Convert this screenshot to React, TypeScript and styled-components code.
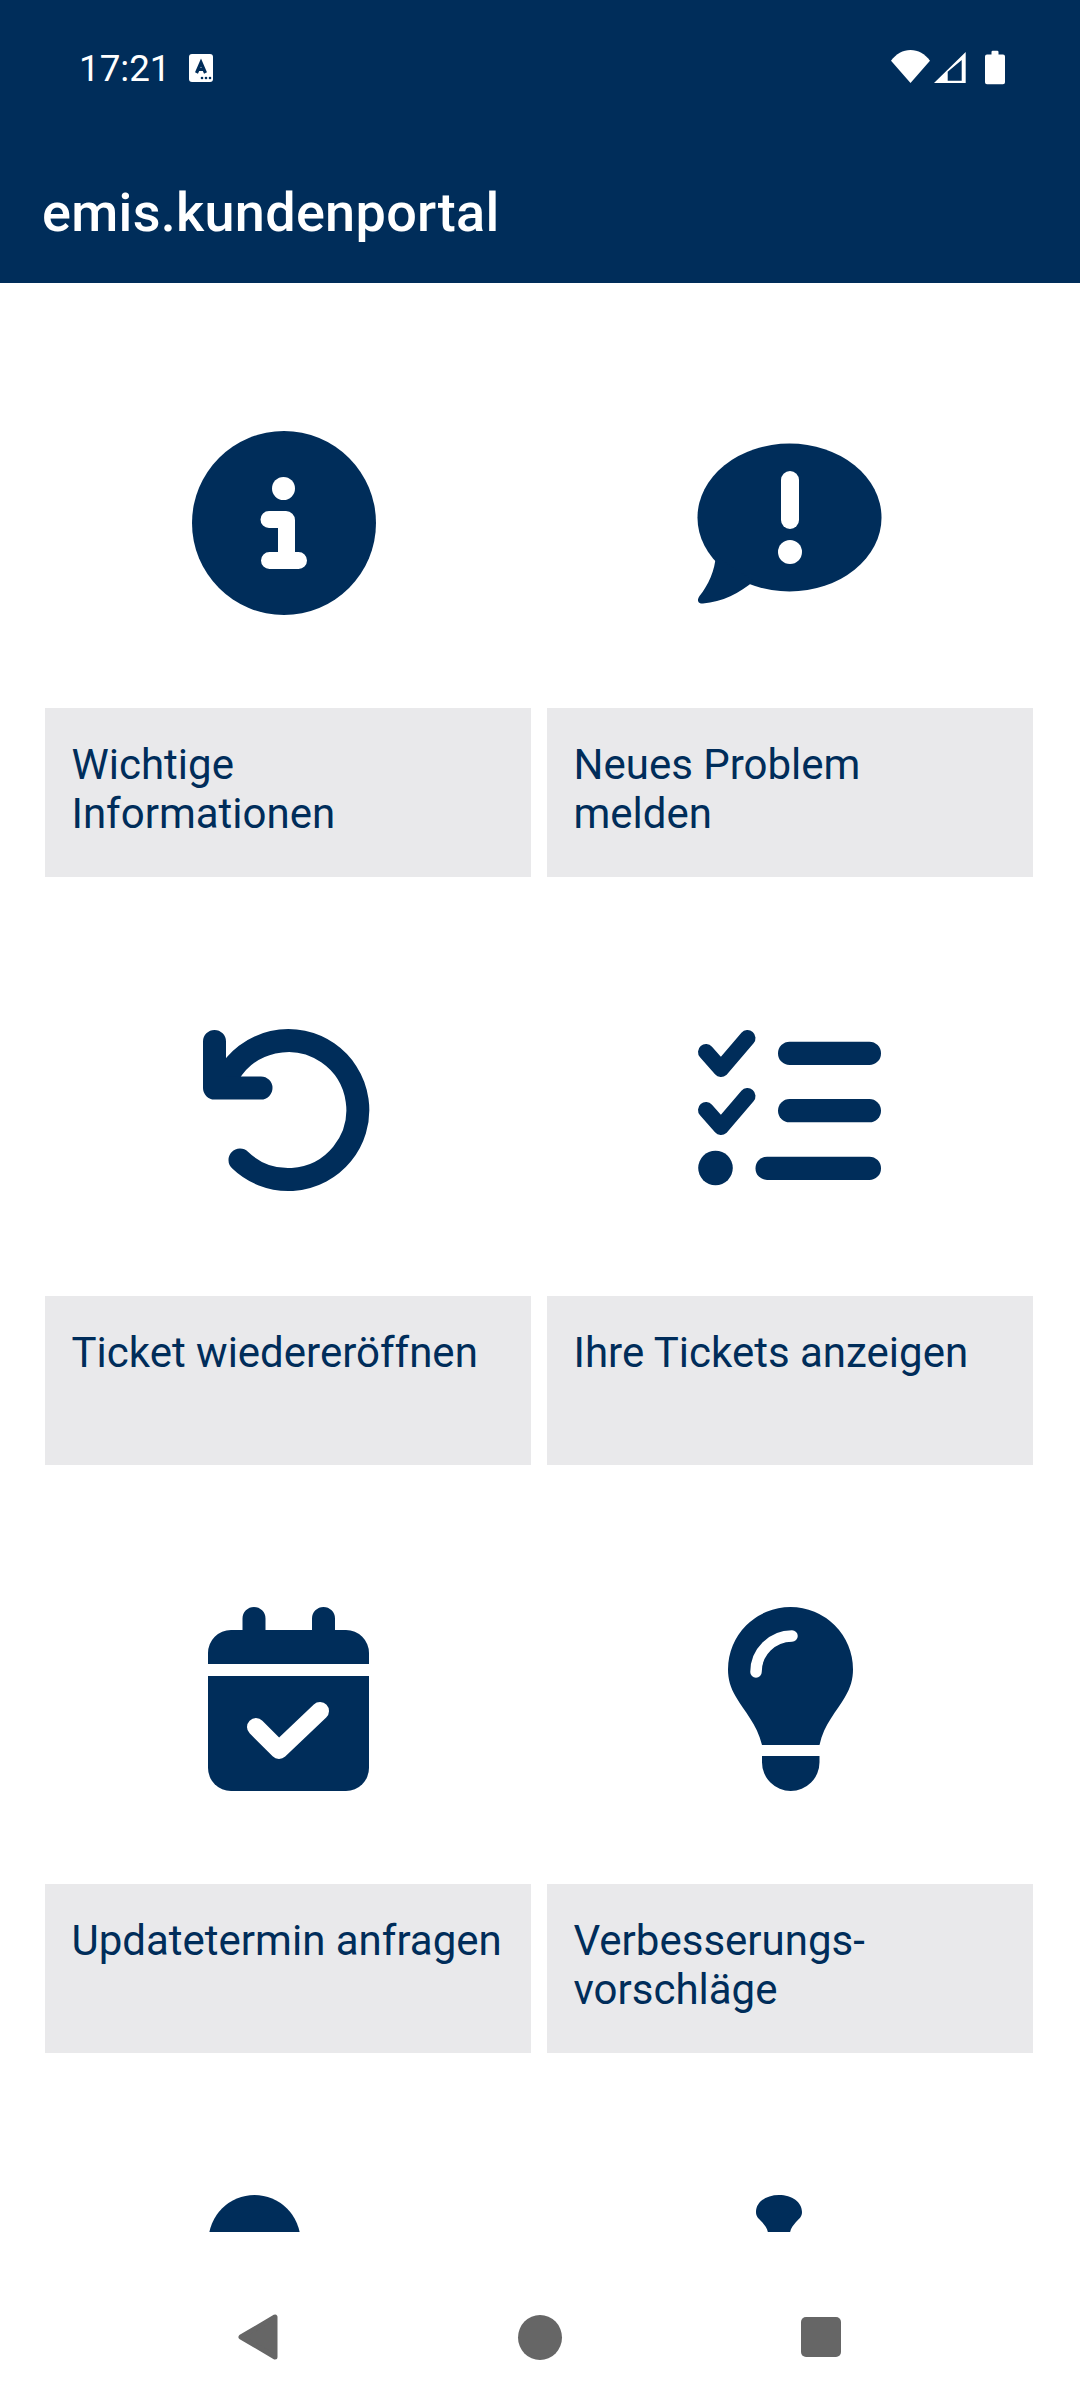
import React from 'react';
import styled, { createGlobalStyle } from 'styled-components';

const NAVY = '#002d5a';

const GlobalStyle = createGlobalStyle`
  html, body {
    margin: 0;
    padding: 0;
    background: #fff;
  }
  body {
    font-family: Roboto, "Liberation Sans", sans-serif;
  }
`;

const Screen = styled.div`
  width: 1080px;
  height: 2400px;
  display: flex;
  flex-direction: column;
  overflow: hidden;
  background: #fff;
`;

const Header = styled.header`
  height: 283px;
  flex: none;
  background: ${NAVY};
  color: #fff;
  display: flex;
  flex-direction: column;
`;

const StatusBar = styled.div`
  height: 136px;
  flex: none;
  padding: 0 75px 0 79px;
  display: flex;
  align-items: center;
  justify-content: space-between;
`;

const StatusLeft = styled.div`
  display: flex;
  align-items: center;
  gap: 18px;
`;

const Time = styled.span`
  font-size: 36.75px;
  line-height: 41px;
`;

const Title = styled.h1`
  margin: 46px 0 0;
  padding-left: 42px;
  font-size: 54px;
  line-height: 61px;
  font-weight: 500;
  letter-spacing: 0.3px;
`;

const Content = styled.main`
  flex: 1;
  min-height: 0;
  overflow: hidden;
  box-sizing: border-box;
  padding: 148px 47px 0 45px;
  display: grid;
  grid-template-columns: 486px 486px;
  column-gap: 16px;
  grid-auto-rows: 588px;
`;

const Tile = styled.section`
  display: flex;
  flex-direction: column;
  align-items: center;
`;

const IconBox = styled.svg`
  width: 192px;
  height: 192px;
  flex: none;
  margin-bottom: 85px;
  fill: ${NAVY};
  stroke: none;
`;

const Label = styled.div`
  align-self: stretch;
  height: 169px;
  box-sizing: border-box;
  padding: 32px 16px 0 26.5px;
  background: #e9e9eb;
  color: ${NAVY};
  font-size: 42px;
  line-height: 49px;
`;

const NavBar = styled.nav`
  height: 168px;
  flex: none;
  background: #fff;
  display: flex;
  justify-content: center;
  align-items: flex-start;
  padding-top: 82px;
  box-sizing: border-box;
`;

const NavButton = styled.div`
  width: 281px;
  height: 46px;
  display: flex;
  align-items: center;
  justify-content: center;
`;

const NavCircle = styled.div`
  width: 44px;
  height: 45px;
  border-radius: 50%;
  background: #666;
`;

const NavSquare = styled.div`
  width: 40px;
  height: 40px;
  border-radius: 5px;
  background: #666;
`;

const InfoIcon = () => (
  <IconBox viewBox="0 0 192 192">
    <circle cx="92" cy="92" r="92" />
    <circle cx="91.5" cy="57.5" r="11.5" fill="#fff" />
    <path
      fill="#fff"
      d="M77 80h17a9 9 0 0 1 9 9v32h3.5a8.5 8.5 0 0 1 0 17h-29a8.5 8.5 0 0 1 0-17H86V97h-9a8.5 8.5 0 0 1 0-17z"
    />
  </IconBox>
);

const ProblemIcon = () => (
  <IconBox viewBox="0 0 192 192">
    <ellipse cx="95.5" cy="86.5" rx="92" ry="74" />
    <path d="M21.6 125C21.5 138 14 155 5.5 165C2 170 5 173 9 172.5C28 171 46 162 60 150z" />
    <rect x="87" y="40" width="18" height="58" rx="9" fill="#fff" />
    <circle cx="96" cy="121" r="12" fill="#fff" />
  </IconBox>
);

const ReopenIcon = () => (
  <IconBox viewBox="0 0 192 192">
    <g fill="none" stroke={NAVY} strokeWidth="23" strokeLinecap="round" strokeLinejoin="round">
      <path d="M48 141A69.5 69.5 0 1 0 36 56.5" />
      <path d="M22.5 22.5V69H69" />
    </g>
  </IconBox>
);

const TicketsIcon = () => (
  <IconBox viewBox="0 0 192 192">
    <g fill="none" stroke={NAVY} strokeWidth="16" strokeLinecap="round" strokeLinejoin="round">
      <path d="M12 33L27 50L53.5 19" />
      <path d="M12 91L27 108L53.5 77" />
    </g>
    <circle cx="21.5" cy="149" r="17.3" />
    <rect x="84" y="22.7" width="103" height="23.3" rx="11.6" />
    <rect x="84" y="80" width="103" height="23.3" rx="11.6" />
    <rect x="61.5" y="137.7" width="125.5" height="23.3" rx="11.6" />
  </IconBox>
);

const CalendarIcon = () => (
  <IconBox viewBox="0 0 192 192">
    <path d="M50.5 23V11.5a11.5 11.5 0 0 1 23 0V23H120V11.5a11.5 11.5 0 0 1 23 0V23h11a23 23 0 0 1 23 23v11H16V46a23 23 0 0 1 23-23z" />
    <path d="M16 69h161v92a23 23 0 0 1-23 23H39a23 23 0 0 1-23-23z" />
    <path
      d="M64 120L87 143L128 104"
      fill="none"
      stroke="#fff"
      strokeWidth="18"
      strokeLinecap="round"
      strokeLinejoin="round"
    />
  </IconBox>
);

const BulbIcon = () => (
  <IconBox viewBox="0 0 192 192">
    <path d="M68 138C63 117 50 104 42 90C36.5 81 34 72 34 62.5A62.5 62.5 0 0 1 159 62.5C159 72 156.5 81 151 90C143 104 130 117 125.5 138z" />
    <path d="M68 149H125.5V155.25a28.75 28.75 0 0 1-57.5 0z" />
    <path
      d="M62 65A36 36 0 0 1 98 29"
      fill="none"
      stroke="#fff"
      strokeWidth="11.5"
      strokeLinecap="round"
    />
  </IconBox>
);

// the last row is cut off by the nav bar, only the tops of these two show
const DomeIcon = () => (
  <IconBox viewBox="0 0 192 192">
    <circle cx="62.5" cy="46" r="46" />
  </IconBox>
);

const SmallBulbIcon = () => (
  <IconBox viewBox="0 0 192 192">
    <path d="M74 38C73.5 33 71 31 68 27C64.5 23 62 22 62 17C62 7 72 0 85 0C98 0 108 7 108 17C108 22 105.5 23 102 27C99 31 96.5 33 96 38z" />
  </IconBox>
);

const tiles = [
  { icon: <InfoIcon />, lines: ['Wichtige', 'Informationen'] },
  { icon: <ProblemIcon />, lines: ['Neues Problem', 'melden'] },
  { icon: <ReopenIcon />, lines: ['Ticket wiedereröffnen'] },
  { icon: <TicketsIcon />, lines: ['Ihre Tickets anzeigen'] },
  { icon: <CalendarIcon />, lines: ['Updatetermin anfragen'] },
  { icon: <BulbIcon />, lines: ['Verbesserungs-', 'vorschläge'] },
  { icon: <DomeIcon /> },
  { icon: <SmallBulbIcon /> },
];

const App = () => (
  <Screen>
    <GlobalStyle />
    <Header>
      <StatusBar>
        <StatusLeft>
          <Time>17:21</Time>
          <svg width="24" height="28" viewBox="0 0 24 28">
            <rect width="24" height="28" rx="3" fill="#fff" />
            <path
              d="M7.5 19L12 8.5L16.5 19M9 15.5H15"
              fill="none"
              stroke={NAVY}
              strokeWidth="3.2"
            />
            <circle cx="13" cy="24" r="1.3" fill={NAVY} />
            <circle cx="17" cy="24" r="1.3" fill={NAVY} />
            <circle cx="21" cy="24" r="1.3" fill={NAVY} />
          </svg>
        </StatusLeft>
        <svg width="114" height="36" viewBox="0 0 114 36">
          <path d="M0 10.7C5 4 12 0 19.5 0C27 0 34 4 39 10.7L19.5 33z" fill="#fff" />
          <path
            d="M43 33L74.7 2V33z M56.7 21.7V30.7H70.7V10z"
            fill="#fff"
            fillRule="evenodd"
          />
          <path d="M96 4.5h4.5V2a1.3 1.3 0 0 1 1.3-1.3h4.4a1.3 1.3 0 0 1 1.3 1.3v2.5H112a2 2 0 0 1 2 2V32.3a2 2 0 0 1-2 2H96a2 2 0 0 1-2-2V6.5a2 2 0 0 1 2-2z" fill="#fff" />
        </svg>
      </StatusBar>
      <Title>emis.kundenportal</Title>
    </Header>
    <Content>
      {tiles.map((tile, i) => (
        <Tile key={i}>
          {tile.icon}
          {tile.lines && (
            <Label>
              {tile.lines.map((line) => (
                <div key={line}>{line}</div>
              ))}
            </Label>
          )}
        </Tile>
      ))}
    </Content>
    <NavBar>
      <NavButton>
        <svg width="42" height="46" viewBox="0 0 42 46">
          <path
            d="M3 23L37 3V43z"
            fill="#666"
            stroke="#666"
            strokeWidth="5"
            strokeLinejoin="round"
          />
        </svg>
      </NavButton>
      <NavButton>
        <NavCircle />
      </NavButton>
      <NavButton>
        <NavSquare />
      </NavButton>
    </NavBar>
  </Screen>
);

export default App;
